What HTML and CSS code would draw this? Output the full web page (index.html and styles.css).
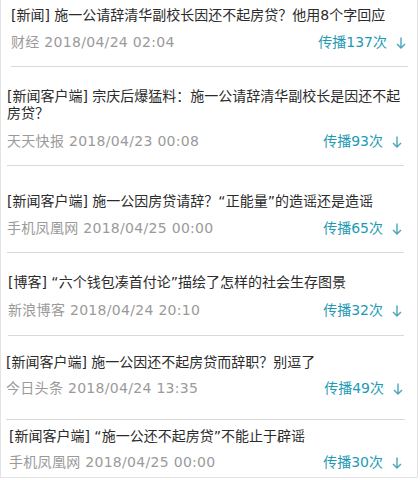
FILE: index.html
```html
<!DOCTYPE html>
<html lang="zh-CN">
<head>
<meta charset="utf-8">
<link rel="stylesheet" href="styles.css">
</head>
<body>
<div class="list">
  <div class="item item-1">
    <div class="title">[新闻] 施一公请辞清华副校长因还不起房贷？他用8个字回应</div>
    <div class="meta"><span class="src">财经 2018/04/24 02:04</span><span class="spread">传播137次<svg class="arrow" viewBox="0 0 10 12"><path d="M5 0.5V11M1 7L5 11L9 7"/></svg></span></div>
  </div>
  <div class="item item-2">
    <div class="title">[新闻客户端] 宗庆后爆猛料：施一公请辞清华副校长是因还不起房贷？</div>
    <div class="meta"><span class="src">天天快报 2018/04/23 00:08</span><span class="spread">传播93次<svg class="arrow" viewBox="0 0 10 12"><path d="M5 0.5V11M1 7L5 11L9 7"/></svg></span></div>
  </div>
  <div class="item item-3">
    <div class="title">[新闻客户端] 施一公因房贷请辞？“正能量”的造谣还是造谣</div>
    <div class="meta"><span class="src">手机凤凰网 2018/04/25 00:00</span><span class="spread">传播65次<svg class="arrow" viewBox="0 0 10 12"><path d="M5 0.5V11M1 7L5 11L9 7"/></svg></span></div>
  </div>
  <div class="item item-4">
    <div class="title">[博客] “六个钱包凑首付论”描绘了怎样的社会生存图景</div>
    <div class="meta"><span class="src">新浪博客 2018/04/24 20:10</span><span class="spread">传播32次<svg class="arrow" viewBox="0 0 10 12"><path d="M5 0.5V11M1 7L5 11L9 7"/></svg></span></div>
  </div>
  <div class="item item-5">
    <div class="title">[新闻客户端] 施一公因还不起房贷而辞职？别逗了</div>
    <div class="meta"><span class="src">今日头条 2018/04/24 13:35</span><span class="spread">传播49次<svg class="arrow" viewBox="0 0 10 12"><path d="M5 0.5V11M1 7L5 11L9 7"/></svg></span></div>
  </div>
  <div class="item item-6">
    <div class="title">[新闻客户端] “施一公还不起房贷”不能止于辟谣</div>
    <div class="meta"><span class="src">手机凤凰网 2018/04/25 00:00</span><span class="spread">传播30次<svg class="arrow" viewBox="0 0 10 12"><path d="M5 0.5V11M1 7L5 11L9 7"/></svg></span></div>
  </div>
</div>
</body>
</html>
```
FILE: styles.css
```css
html, body {
  margin: 0;
  padding: 0;
  background: #fff;
}
body {
  font-family: "DejaVu Sans", "Noto Sans CJK SC", sans-serif;
  font-size: 14px;
}
.list {
  width: 416px;
  border: 1px solid #e3e3e3;
  border-top: none;
}
.item {
  border-bottom: 1px solid #d9d9d9;
}
.title {
  color: #2b2b2b;
  line-height: 17px;
}
.meta {
  display: flex;
  justify-content: space-between;
  align-items: center;
  line-height: 17px;
  padding-right: 2px;
}
.src {
  color: #9a9a9a;
  letter-spacing: 0.3px;
}
.spread {
  color: #1e9ab3;
  display: flex;
  align-items: center;
  gap: 9px;
}
.arrow {
  width: 10px;
  height: 12px;
  fill: none;
  stroke: #4aa6bd;
  stroke-width: 1.4;
}
.item-1 { margin: 0 9px 0 10px; padding: 7px 0 15px; }
.item-1 .title { margin-bottom: 10px; }
.item-2 { margin: 0 13px 0 6px; padding: 21px 0 15px; }
.item-2 .title { margin-bottom: 11px; }
.item-3 { margin: 0 13px 0 6px; padding: 27px 0 15px; }
.item-3 .title { margin-bottom: 10px; }
.item-4 { margin: 0 13px 0 7px; padding: 21px 0 16px; }
.item-4 .title { margin-bottom: 11px; }
.item-5 { margin: 0 12px 0 5px; padding: 18px 0 22px; }
.item-5 .title { margin-bottom: 9px; }
.item-6 { margin: 0 13px 0 8px; padding: 8px 0 6px; border-bottom: none; }
.item-6 .title { margin-bottom: 9px; }
```
